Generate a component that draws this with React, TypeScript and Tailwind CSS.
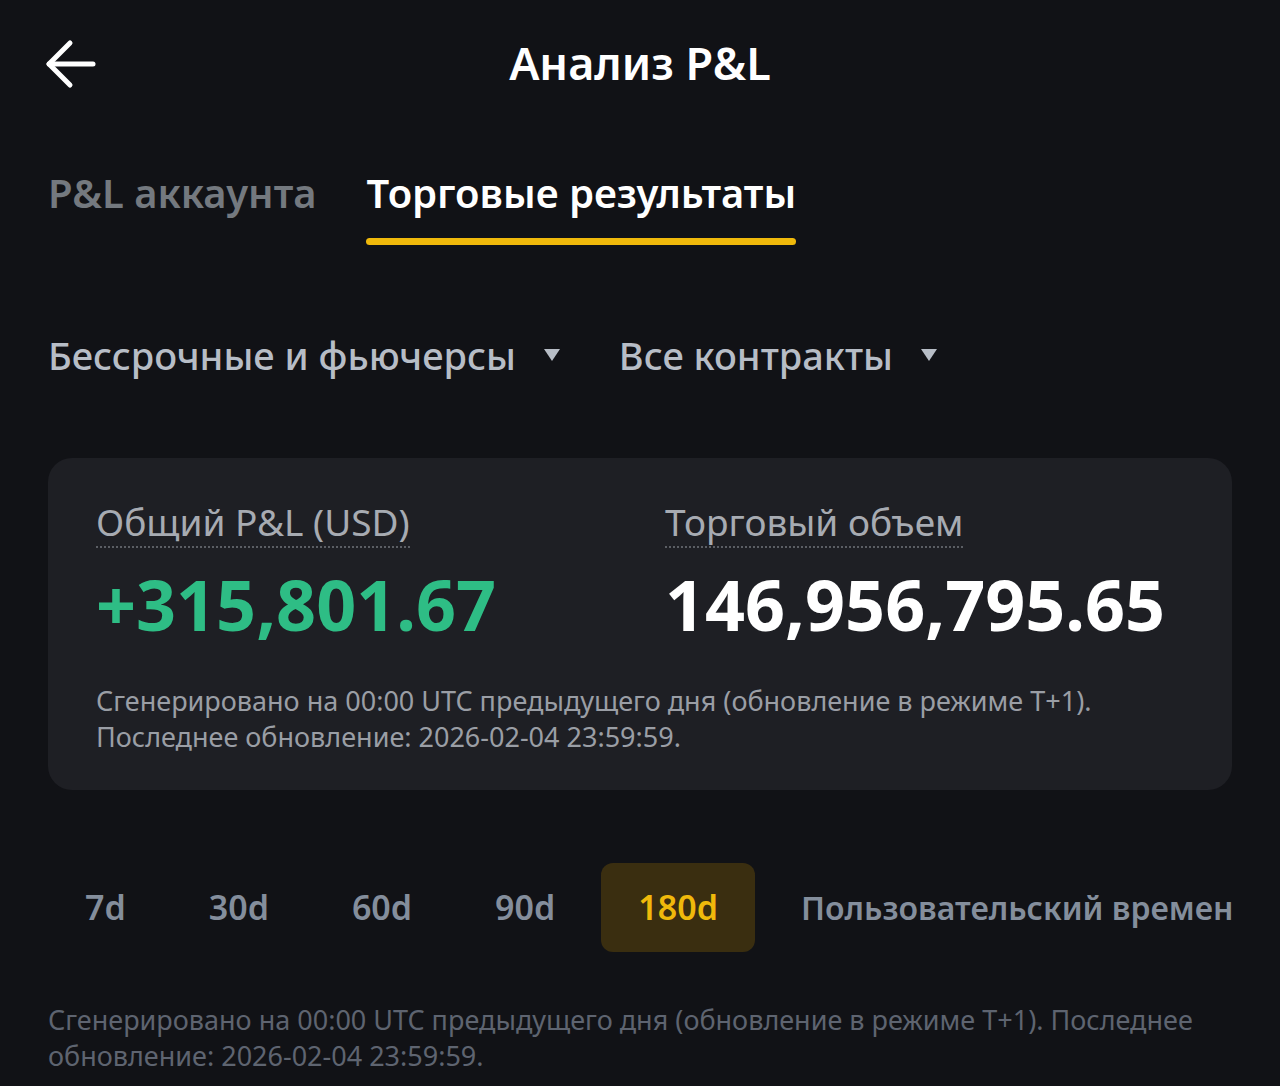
import React from 'react';

const periods = ['7d', '30d', '60d', '90d', '180d'];

function BackArrow() {
    return (
        <svg width="52" height="50" viewBox="0 0 52 50" fill="none" stroke="#ffffff" strokeWidth="5" strokeLinecap="round" strokeLinejoin="round">
            <path d="M4 25H48" />
            <path d="M25 4L4 25L25 46" />
        </svg>
    );
}

function Caret() {
    return (
        <svg width="18" height="14" viewBox="0 0 18 14" className="ml-[27px]">
            <path d="M1 1H17L9 13Z" fill="#b7bdc6" />
        </svg>
    );
}

export default function App() {
    return (
        <div className="w-[1280px] h-[1086px] overflow-hidden bg-[#111216] text-white" style={{ fontFamily: '"Noto Sans", "Open Sans", sans-serif' }}>
            {/* header */}
            <div className="relative h-[126px] flex items-center justify-center">
                <div className="absolute left-[45px] top-[39px]">
                    <BackArrow />
                </div>
                <h1 className="text-[45px] leading-[52px] font-semibold text-white">Анализ P&amp;L</h1>
            </div>

            {/* tabs */}
            <div className="flex gap-[50px] px-12 pt-[43px]">
                <div className="flex flex-col">
                    <span className="text-[40px] leading-[48px] font-semibold text-[#74797f]">P&amp;L аккаунта</span>
                </div>
                <div className="flex flex-col">
                    <span className="text-[40px] leading-[48px] font-semibold text-white">Торговые результаты</span>
                    <div className="mt-[21px] h-[7px] bg-[#f0b90b] rounded-sm" />
                </div>
            </div>

            {/* filters */}
            <div className="flex items-center px-12 mt-[86px]">
                <div className="flex items-center">
                    <span className="text-[38px] leading-[48px] font-medium text-[#b7bdc6]">Бессрочные и фьючерсы</span>
                    <Caret />
                </div>
                <div className="flex items-center ml-[58px]">
                    <span className="text-[38px] leading-[48px] font-medium text-[#b7bdc6]">Все контракты</span>
                    <Caret />
                </div>
            </div>

            {/* summary card */}
            <div className="mx-12 mt-[79px] rounded-[24px] bg-[#1e1f24] px-12 pt-[40px] pb-[35px]">
                <div className="flex">
                    <div className="w-[569px]">
                        <span className="inline-block text-[37px] leading-[48px] text-[#a7abb2] border-b-2 border-dotted border-[#5b5e64]">Общий P&amp;L (USD)</span>
                        <div className="mt-[15px] text-[70px] leading-[82px] font-bold text-[#2ebd85]">+315,801.67</div>
                    </div>
                    <div>
                        <span className="inline-block text-[37px] leading-[48px] text-[#a7abb2] border-b-2 border-dotted border-[#5b5e64]">Торговый объем</span>
                        <div className="mt-[15px] text-[70px] leading-[82px] font-bold text-white">146,956,795.65</div>
                    </div>
                </div>
                <p className="mt-[38px] text-[27px] leading-[36px] text-[#9a9ea5]">
                    Сгенерировано на 00:00 UTC предыдущего дня (обновление в режиме T+1).<br />
                    Последнее обновление: 2026-02-04 23:59:59.
                </p>
            </div>

            {/* period selector */}
            <div className="flex gap-[9px] pl-12 mt-[73px] whitespace-nowrap overflow-hidden pr-12">
                {periods.map((p) => (
                    <div
                        key={p}
                        className={
                            p === '180d'
                                ? 'h-[89px] px-[37px] flex items-center rounded-[12px] bg-[#3a2e10] text-[#f0b90b] text-[34px] font-semibold'
                                : 'h-[89px] px-[37px] flex items-center rounded-[12px] text-[#848e9c] text-[34px] font-semibold'
                        }
                    >
                        {p}
                    </div>
                ))}
                <div className="h-[89px] pl-[37px] flex items-center text-[#848e9c] text-[32px] font-semibold overflow-hidden">
                    Пользовательский временной диапазон
                </div>
            </div>

            {/* footer note */}
            <p className="px-12 mt-[50px] text-[27px] leading-[36px] text-[#5e6470]">
                Сгенерировано на 00:00 UTC предыдущего дня (обновление в режиме T+1). Последнее обновление: 2026-02-04 23:59:59.
            </p>
        </div>
    );
}
